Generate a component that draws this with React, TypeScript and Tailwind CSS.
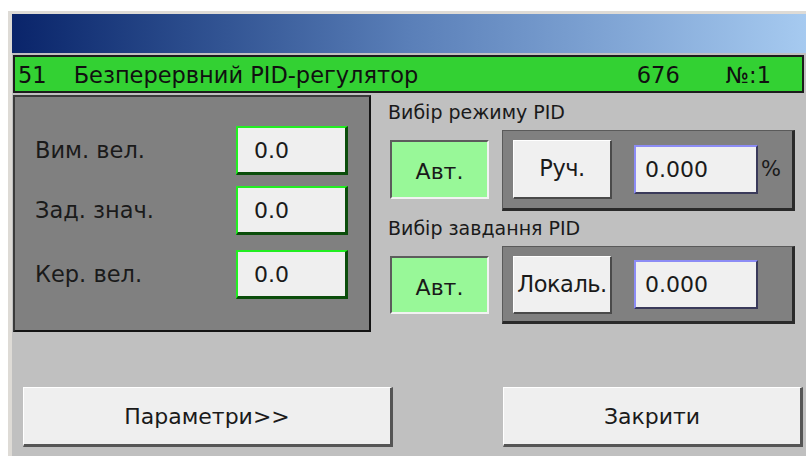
import React from 'react';

const font = { fontFamily: '"DejaVu Sans", "Noto Sans", sans-serif' };

function ValueBox({ value }: { value: string }) {
  return (
    <div className="w-[112px] h-[49px] bg-[#efefef] border-t-2 border-l-2 border-t-[#22ee22] border-l-[#22ee22] border-b-[3px] border-r-[3px] border-b-[#0b4d0b] border-r-[#0b4d0b] flex items-center pl-[16px] text-[22px] text-[#1a1a1a]">
      {value}
    </div>
  );
}

function MeasureRow({ label, value, top }: { label: string; value: string; top: string }) {
  return (
    <div className={`flex items-center ${top}`}>
      <span className="w-[201px] text-[22.5px] text-[#1a1a1a]">{label}</span>
      <ValueBox value={value} />
    </div>
  );
}

function AutoButton({ top, h }: { top: string; h: string }) {
  return (
    <div
      className={`w-[99px] ${h} ${top} bg-[#98f898] border-t-2 border-l-2 border-t-[#5c5c5c] border-l-[#5c5c5c] border-b-2 border-r-2 border-b-[#f2f2f2] border-r-[#f2f2f2] flex items-center justify-center pt-[4px] text-[22px] text-[#1a1a1a]`}
    >
      Авт.
    </div>
  );
}

function ModeButton({ label, h }: { label: string; h: string }) {
  return (
    <div
      className={`w-[99px] ${h} bg-[#f0f0f0] border-t border-l border-t-white border-l-white border-b-2 border-r-2 border-b-[#4a4a4a] border-r-[#4a4a4a] flex items-center justify-center whitespace-nowrap text-[22.5px] tracking-[-0.5px] text-[#1a1a1a]`}
    >
      {label}
    </div>
  );
}

function NumInput({ value, h }: { value: string; h: string }) {
  return (
    <div
      className={`w-[124px] ${h} bg-[#f0f0f0] border-t-2 border-l-2 border-t-[#8c8cf5] border-l-[#8c8cf5] border-b-2 border-r-2 border-b-[#3a3a5a] border-r-[#3a3a5a] flex items-center pl-[9px] text-[22px] text-[#1a1a1a]`}
    >
      {value}
    </div>
  );
}

function Section({
  title,
  sub,
  panelH,
  btnH,
  inputH,
  percent,
}: {
  title: string;
  sub: string;
  panelH: string;
  btnH: string;
  inputH: string;
  percent?: boolean;
}) {
  return (
    <div>
      <div className="h-[35px] flex items-center pl-[17px] text-[19px] text-[#1a1a1a]">{title}</div>
      <div className="flex items-start pl-[19px]">
        <AutoButton top="mt-[10px]" h={btnH} />
        <div
          className={`ml-[13px] w-[293px] ${panelH} bg-[#808080] border-t border-l border-t-[#5a5a5a] border-l-[#5a5a5a] border-b-[3px] border-r-[3px] border-b-[#2a2a2a] border-r-[#2a2a2a] flex items-start pl-[10px] pt-[9px]`}
        >
          <ModeButton label={sub} h={btnH} />
          <div className={`ml-[22px] ${percent ? 'mt-[5px]' : 'mt-[4px]'}`}>
            <NumInput value="0.000" h={inputH} />
          </div>
          {percent && <span className="ml-[3px] mt-[14px] text-[21px] text-[#1a1a1a]">%</span>}
        </div>
      </div>
    </div>
  );
}

export default function App() {
  return (
    <div className="w-[806px] h-[456px] bg-white pl-[8px] pt-[11px] overflow-hidden" style={font}>
      <div className="h-full border-l-4 border-t-[3px] border-[#dedbd6] bg-[#c0c0c0] flex flex-col">
        {/* caption strip */}
        <div className="h-[39px] bg-gradient-to-r from-[#0a246a] via-[#5a7fb8] to-[#a6caf0]" />

        {/* tag header */}
        <div className="mt-[2px] ml-px mr-[2px] h-[38px] border-2 border-[#1c1c1c] bg-[#33d133] flex items-center pt-[3px] text-[22.5px] text-[#101010] leading-none">
          <span className="ml-[3px]">51</span>
          <span className="ml-[27px]">Безперервний PID-регулятор</span>
          <span className="ml-auto">676</span>
          <span className="ml-[46px] mr-[31px]">№:1</span>
        </div>

        <div className="mt-[2px] flex">
          {/* measured values */}
          <div className="ml-px w-[358px] h-[237px] bg-[#808080] border-t-2 border-l-2 border-t-[#3a3a3a] border-l-[#3a3a3a] border-b-2 border-r-2 border-b-[#141414] border-r-[#141414] pl-[20px]">
            <MeasureRow label="Вим. вел." value="0.0" top="mt-[29px]" />
            <MeasureRow label="Зад. знач." value="0.0" top="mt-[11px]" />
            <MeasureRow label="Кер. вел." value="0.0" top="mt-[15px]" />
          </div>

          <div className="flex flex-col">
            <Section title="Вибір режиму PID" sub="Руч." panelH="h-[81px]" btnH="h-[59px]" inputH="h-[49px]" percent />
            <Section title="Вибір завдання PID" sub="Локаль." panelH="h-[78px]" btnH="h-[58px]" inputH="h-[49px]" />
          </div>
        </div>

        {/* footer buttons */}
        <div className="mt-auto mb-[9px] flex justify-between pl-[11px] pr-[3px]">
          <button className="w-[370px] h-[60px] bg-[#efefef] border-t border-l border-t-white border-l-white border-b-[3px] border-r-[3px] border-b-[#555] border-r-[#555] text-[22px] text-[#1a1a1a]">
            Параметри&gt;&gt;
          </button>
          <button className="w-[300px] h-[60px] bg-[#efefef] border-t border-l border-t-white border-l-white border-b-[3px] border-r-[3px] border-b-[#555] border-r-[#555] text-[22px] text-[#1a1a1a]">
            Закрити
          </button>
        </div>
      </div>
    </div>
  );
}
